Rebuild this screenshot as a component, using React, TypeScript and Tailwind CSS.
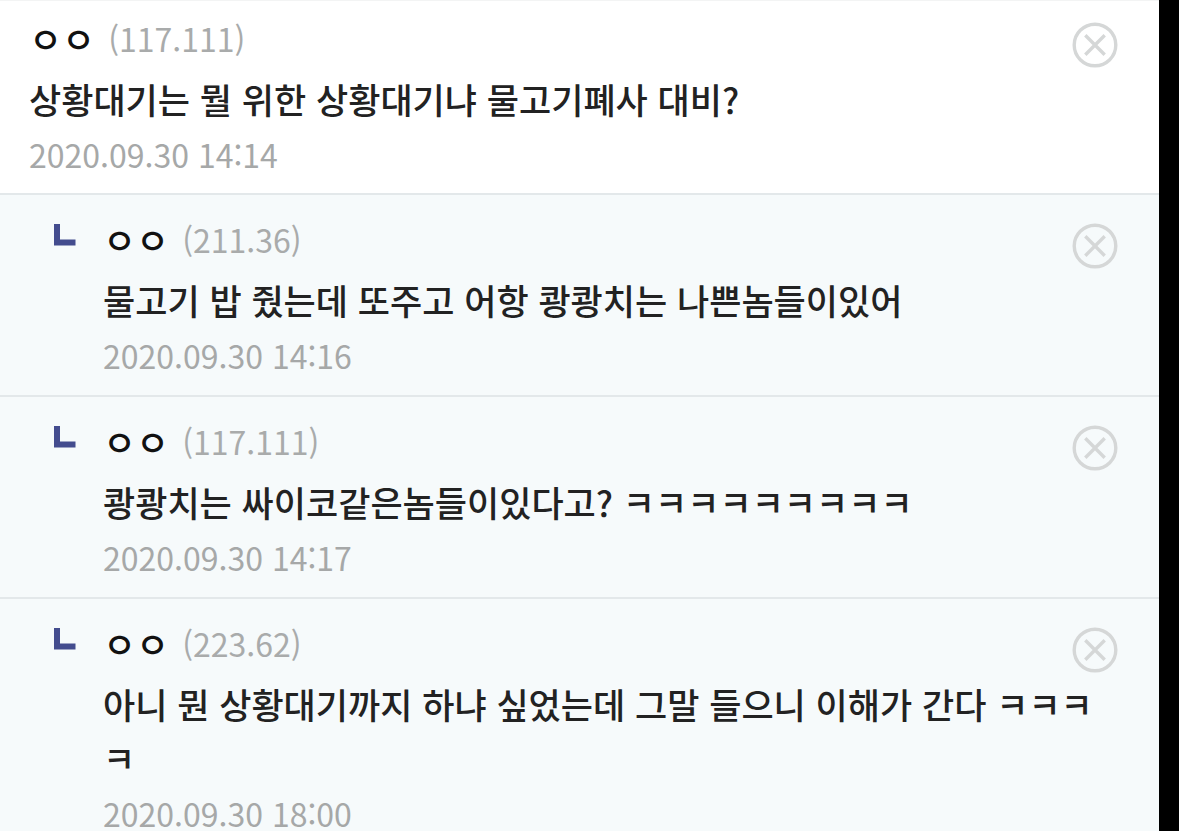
type Comment = { ip: string; text: string; date: string; reply: boolean };

const comments: Comment[] = [
  { ip: "(117.111)", text: "상황대기는 뭘 위한 상황대기냐 물고기폐사 대비?", date: "2020.09.30 14:14", reply: false },
  { ip: "(211.36)", text: "물고기 밥 줬는데 또주고 어항 쾅쾅치는 나쁜놈들이있어", date: "2020.09.30 14:16", reply: true },
  { ip: "(117.111)", text: "쾅쾅치는 싸이코같은놈들이있다고? ㅋㅋㅋㅋㅋㅋㅋㅋㅋ", date: "2020.09.30 14:17", reply: true },
  { ip: "(223.62)", text: "아니 뭔 상황대기까지 하냐 싶었는데 그말 들으니 이해가 간다 ㅋㅋㅋㅋ", date: "2020.09.30 18:00", reply: true },
];

function DeleteButton() {
  return (
    <button type="button" aria-label="삭제" className="mt-[7px] size-12 shrink-0 text-[#d5d7d7]">
      <svg viewBox="0 0 48 48" fill="none" stroke="currentColor" className="size-12">
        <circle cx="24" cy="24" r="20.8" strokeWidth="3.4" />
        <path d="M14.3 14.3 33.7 33.7M33.7 14.3 14.3 33.7" strokeWidth="3.4" />
      </svg>
    </button>
  );
}

function CommentRow({ comment }: { comment: Comment }) {
  return (
    <li
      className={
        comment.reply
          ? "relative flex border-t-2 border-[#e3e8ea] bg-[#f6fafb] pt-5 pr-10 pb-3 pl-[103px]"
          : "relative flex border-t border-[#f3f4f4] bg-white pt-[13px] pr-10 pb-[11px] pl-[29px]"
      }
    >
      {comment.reply && (
        <svg viewBox="0 0 22 22" className="absolute top-[29px] left-[54px] size-[22px]" aria-hidden="true">
          <path d="M0 0H6V15.5H21.5V21.5H0Z" fill="#434c8e" />
        </svg>
      )}
      <div className="min-w-0 flex-1">
        <div className="flex h-12 items-center gap-[13px]">
          <span className="text-[36px] leading-[48px] font-medium text-[#111111]">ㅇㅇ</span>
          <span className="text-[32px] leading-[48px] text-[#a9abab]">{comment.ip}</span>
        </div>
        <p className="-mr-12 pt-[10px] text-[35px] leading-[54px] font-medium break-all text-[#222222]">
          {comment.text}
        </p>
        <time className="block text-[32px] leading-[56px] text-[#a6a8a8]">{comment.date}</time>
      </div>
      <DeleteButton />
    </li>
  );
}

export default function App() {
  return (
    <main lang="ko" className="h-screen overflow-hidden bg-black pr-5 font-['Noto_Sans_CJK_KR',sans-serif]">
      <ul>
        {comments.map((comment) => (
          <CommentRow key={comment.date} comment={comment} />
        ))}
      </ul>
    </main>
  );
}
